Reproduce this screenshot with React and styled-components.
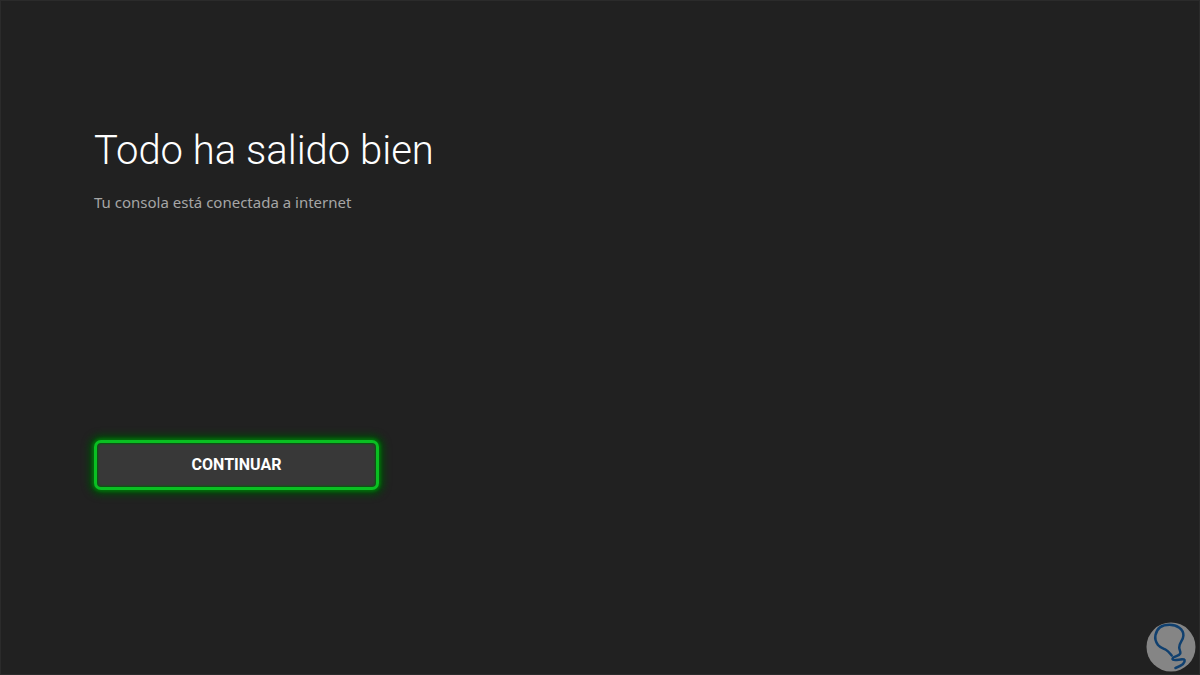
import styled, { createGlobalStyle } from 'styled-components';

const GlobalStyle = createGlobalStyle`
	* {
		box-sizing: border-box;
	}

	body {
		margin: 0;
		background: #212121;
	}
`;

const Screen = styled.div`
	display: flex;
	flex-direction: column;
	min-height: 100vh;
	padding: 0 3px 2px 93px;
	border: 1px solid #2b2b2b;
	color: #fff;
	font-family: Roboto, 'Liberation Sans', sans-serif;
`;

const Content = styled.main`
	display: flex;
	flex: 1;
	flex-direction: column;
	align-items: flex-start;
	padding-top: 126px;
`;

const Title = styled.h1`
	margin: 0;
	font-size: 40px;
	font-weight: 300;
	line-height: 48px;
`;

const Message = styled.p`
	margin: 15px 0 0;
	color: #a6a6a6;
	font-family: 'Noto Sans', 'Open Sans', sans-serif;
	font-size: 15px;
	line-height: 24px;
`;

const FocusButton = styled.button`
	width: 285px;
	max-width: 100%;
	height: 50px;
	margin-top: 226px;
	padding: 0;
	border: 3px solid #0abf22;
	border-radius: 7px;
	background: #383838;
	box-shadow:
		0 0 3px 2px #046b0c,
		0 0 7px 5px #03450a,
		inset 0 0 2px 1px #045c0a;
	color: #fff;
	font-family: inherit;
	font-size: 16px;
	font-weight: 700;
	line-height: 20px;
	text-transform: uppercase;
	cursor: pointer;
	outline: none;
`;

const Footer = styled.footer`
	display: flex;
	justify-content: flex-end;
`;

const BulbLogo = () => (
	<svg width="50" height="50" viewBox="0 0 50 50" aria-hidden="true">
		<circle cx="25" cy="25" r="24.5" fill="#858585" />
		<path
			d="M25.7 33.5 C24 31.5 22.5 29 19.5 27.5 C16 26 14 25.5 12 23 C9.8 20 8.6 17 9.5 13 C11 6 16.5 2.8 23.5 2.8 C31 2.8 37.6 7 37.4 13.5 C37.3 18.5 33 20.5 33.2 25.5 C33.3 28 34.8 29.5 34.3 31.5 C33 34.5 26.3 34.5 26.5 37 C27 40 37.5 35.5 38.6 38 C39.5 41.5 33.5 44.5 29.5 46"
			fill="none"
			stroke="#10406f"
			strokeWidth="2.5"
			strokeLinecap="round"
			strokeLinejoin="round"
		/>
	</svg>
);

const App = () => (
	<>
		<GlobalStyle />
		<Screen>
			<Content>
				<Title>Todo ha salido bien</Title>
				<Message>Tu consola está conectada a internet</Message>
				<FocusButton type="button">Continuar</FocusButton>
			</Content>
			<Footer>
				<BulbLogo />
			</Footer>
		</Screen>
	</>
);

export default App;
